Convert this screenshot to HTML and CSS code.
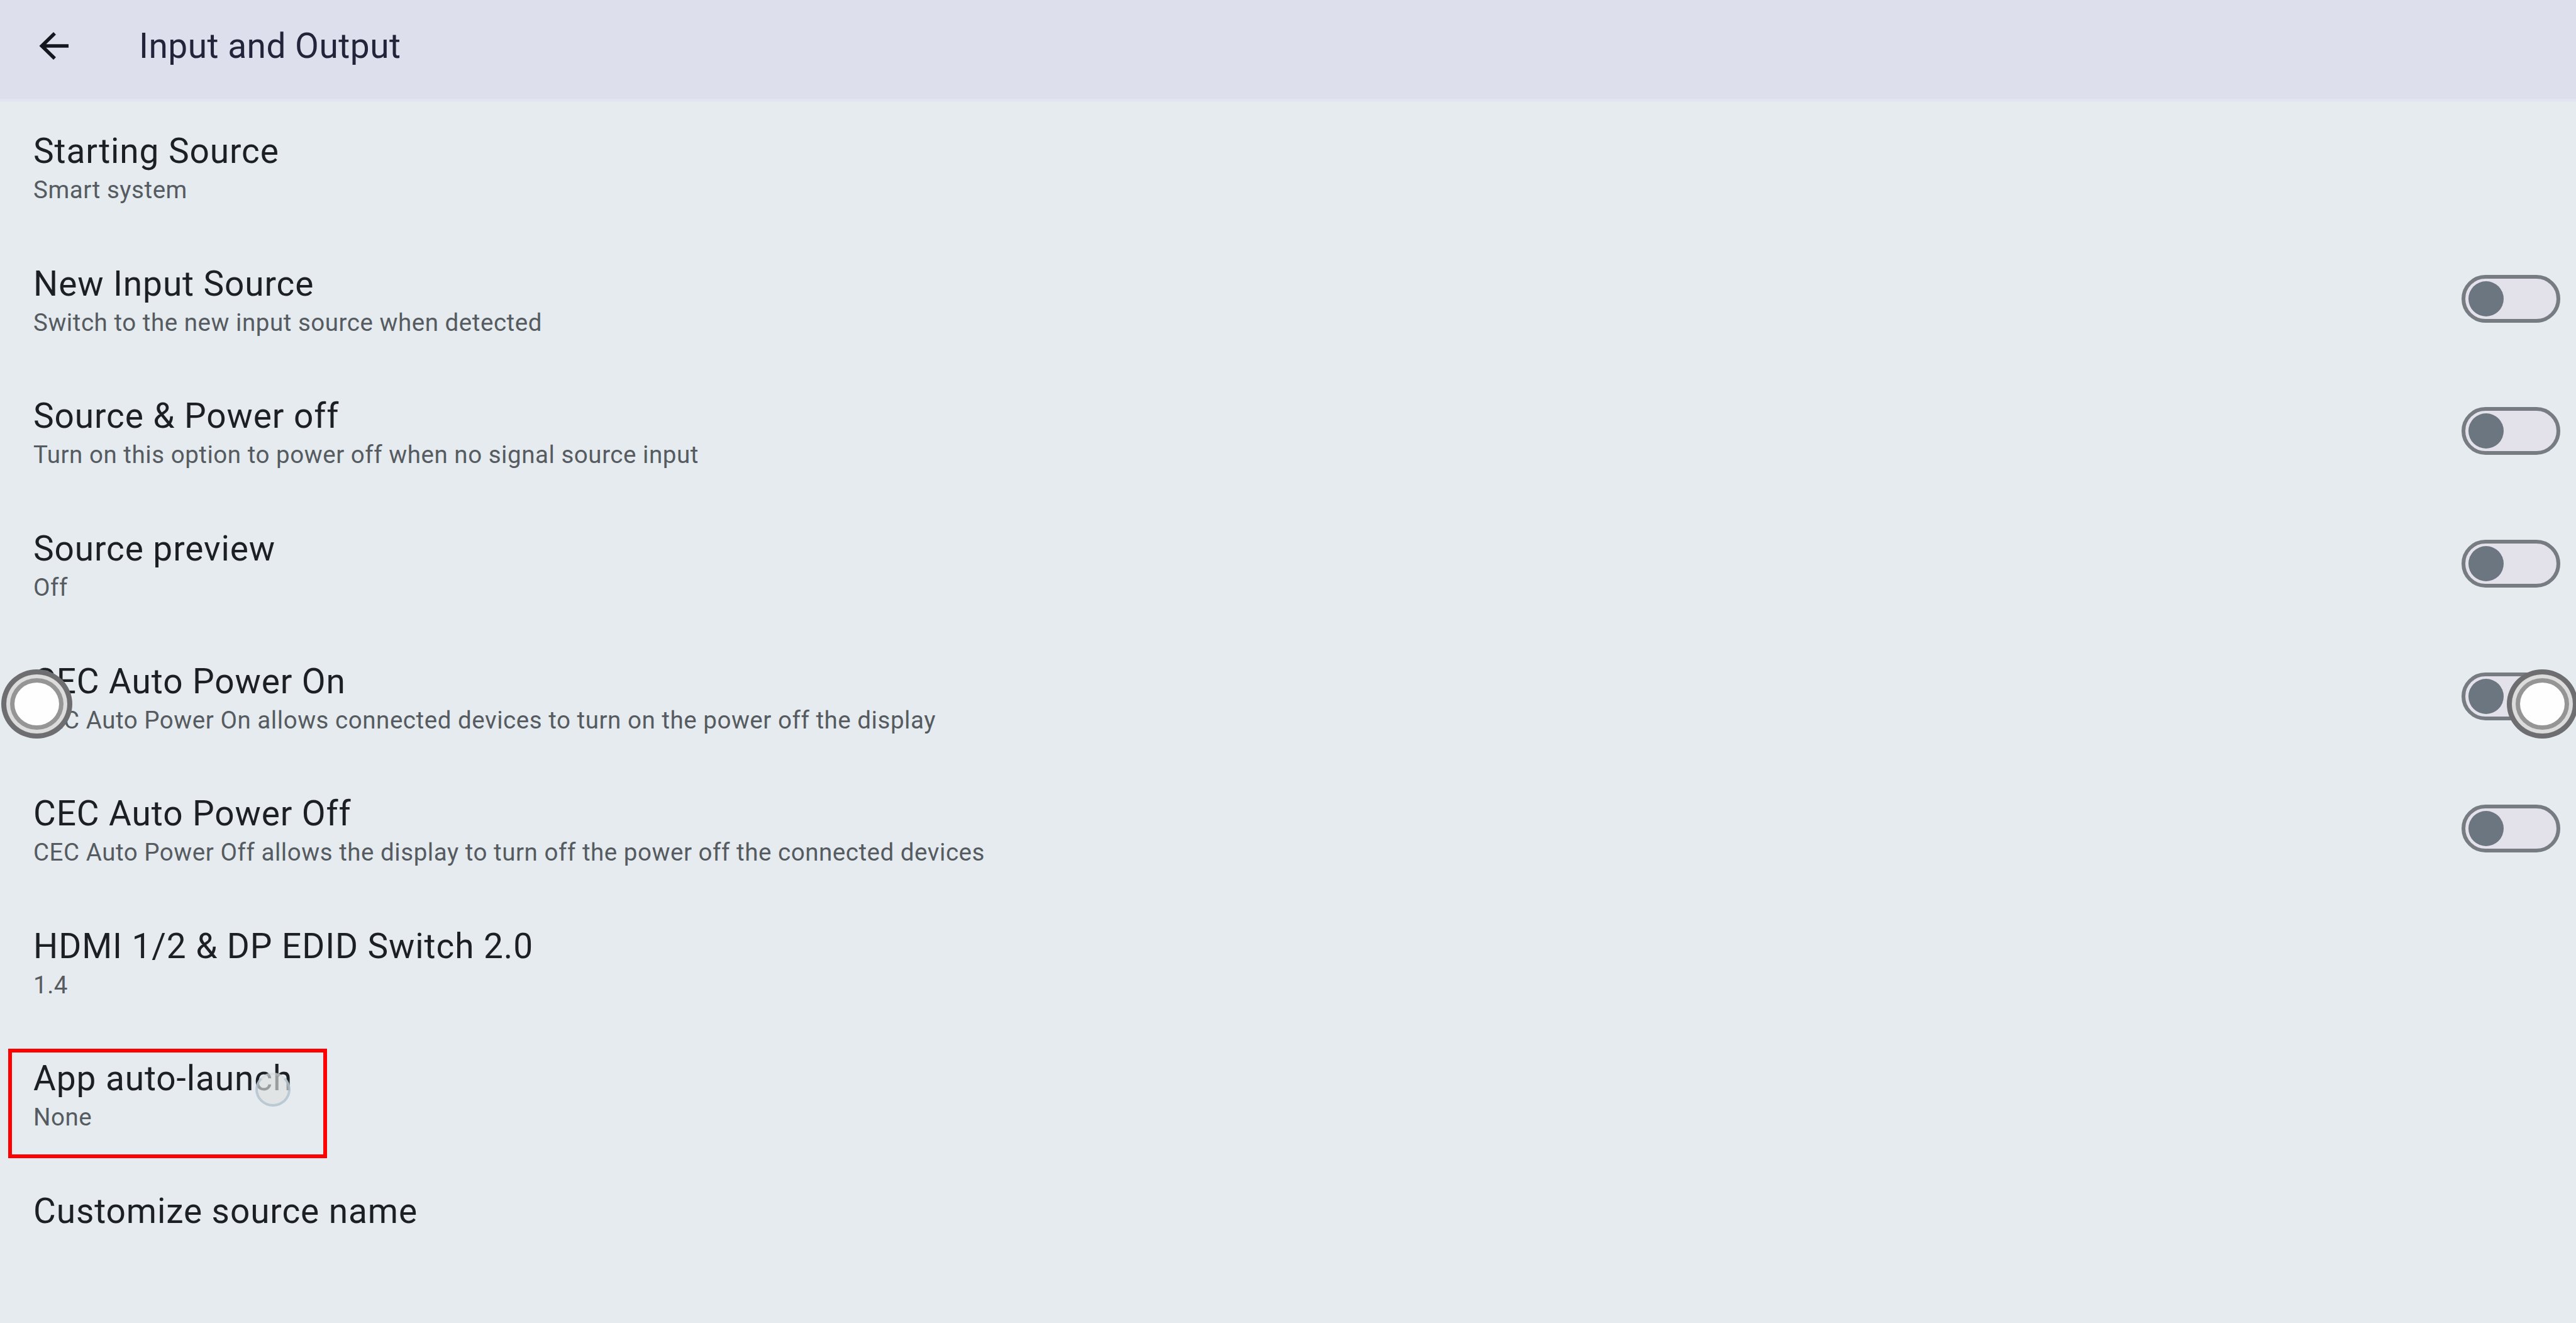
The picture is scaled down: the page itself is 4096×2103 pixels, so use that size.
FILE: index.html
```html
<!DOCTYPE html>
<html lang="en">
<head>
  <meta charset="UTF-8" />
  <meta name="viewport" content="width=device-width, initial-scale=1.0"/>
  <title>Input and Output</title>
  <link rel="stylesheet" href="styles.css">
</head>
<body>
  <header class="topbar">
    <svg class="back" viewBox="0 0 48 44" fill="none" stroke="#14171f" stroke-width="5.6">
      <path d="M47 22H5M25 2L4.5 22L25 42"/>
    </svg>
    <h1>Input and Output</h1>
  </header>

  <main class="list">
    <div class="row">
      <div class="text">
        <h2>Starting Source</h2>
        <p>Smart system</p>
      </div>
    </div>
    <div class="row">
      <div class="text">
        <h2>New Input Source</h2>
        <p>Switch to the new input source when detected</p>
      </div>
      <div class="switch"></div>
    </div>
    <div class="row">
      <div class="text">
        <h2>Source &amp; Power off</h2>
        <p>Turn on this option to power off when no signal source input</p>
      </div>
      <div class="switch"></div>
    </div>
    <div class="row">
      <div class="text">
        <h2>Source preview</h2>
        <p>Off</p>
      </div>
      <div class="switch"></div>
    </div>
    <div class="row">
      <div class="text">
        <h2>CEC Auto Power On</h2>
        <p>CEC Auto Power On allows connected devices to turn on the power off the display</p>
      </div>
      <div class="switch"></div>
    </div>
    <div class="row">
      <div class="text">
        <h2>CEC Auto Power Off</h2>
        <p>CEC Auto Power Off allows the display to turn off the power off the connected devices</p>
      </div>
      <div class="switch"></div>
    </div>
    <div class="row">
      <div class="text">
        <h2>HDMI 1/2 &amp; DP EDID Switch 2.0</h2>
        <p>1.4</p>
      </div>
    </div>
    <div class="row">
      <div class="text">
        <h2>App auto-launch</h2>
        <p>None</p>
      </div>
    </div>
    <div class="row">
      <div class="text">
        <h2>Customize source name</h2>
      </div>
    </div>
  </main>

  <!-- floating side handles -->
  <div class="handle handle-left"></div>
  <div class="handle handle-right"></div>

  <!-- touch point and highlight -->
  <div class="touch"></div>
  <div class="highlight"></div>
</body>
</html>
```
FILE: styles.css
```css
* {
  box-sizing: border-box;
}
body {
  margin: 0;
  position: relative;
  width: 4096px;
  height: 2103px;
  overflow: hidden;
  font-family: Roboto, sans-serif;
  background-color: #e5ebee;
  color: #1c2024;
}
h1, h2, p {
  margin: 0;
  font-weight: 400;
  white-space: nowrap;
}
.topbar {
  display: flex;
  align-items: center;
  height: 162px;
  padding: 0 0 12px 62px;
  background-color: #dddfec;
  border-bottom: 5px solid #e2e5ef;
}
.back {
  width: 48px;
  height: 44px;
}
h1 {
  margin-left: 111px;
  font-size: 55px;
  line-height: 64px;
  letter-spacing: 0.5px;
  color: #22253a;
}
.row {
  display: flex;
  justify-content: space-between;
  align-items: flex-start;
  height: 210.65px;
  padding: 46px 25px 0 53px;
}
h2 {
  font-size: 55px;
  line-height: 64px;
  letter-spacing: 0.9px;
}
p {
  margin-top: 6px;
  font-size: 38.5px;
  line-height: 48px;
  letter-spacing: 0.54px;
  color: #555b60;
}
.switch {
  width: 157px;
  height: 76px;
  margin-top: 18px;
  padding: 4px 5px;
  border: 6px solid #777b82;
  border-radius: 38px;
  background-color: #e3e1ea;
}
.switch::before {
  content: "";
  display: block;
  width: 56px;
  height: 56px;
  border-radius: 50%;
  background-color: #6c7680;
}
.handle {
  position: absolute;
  top: 1064px;
  width: 113px;
  height: 110px;
  border: 8px solid #6e6e70;
  border-radius: 50%;
  background-color: #fefefe;
  box-shadow: inset 0 0 0 6px #dcdcdc, inset 0 0 0 13px #959595;
}
.handle-left {
  left: 2px;
}
.handle-right {
  left: 3986px;
}
.touch {
  position: absolute;
  left: 406px;
  top: 1705px;
  width: 56px;
  height: 54px;
  border: 4px solid rgba(170, 190, 202, 0.7);
  border-top-color: rgba(200, 210, 216, 0.3);
  border-radius: 50%;
  background-color: rgba(221, 224, 224, 0.65);
}
.highlight {
  position: absolute;
  left: 13px;
  top: 1667px;
  width: 507px;
  height: 174px;
  border: 6px solid #ff0000;
}
```
